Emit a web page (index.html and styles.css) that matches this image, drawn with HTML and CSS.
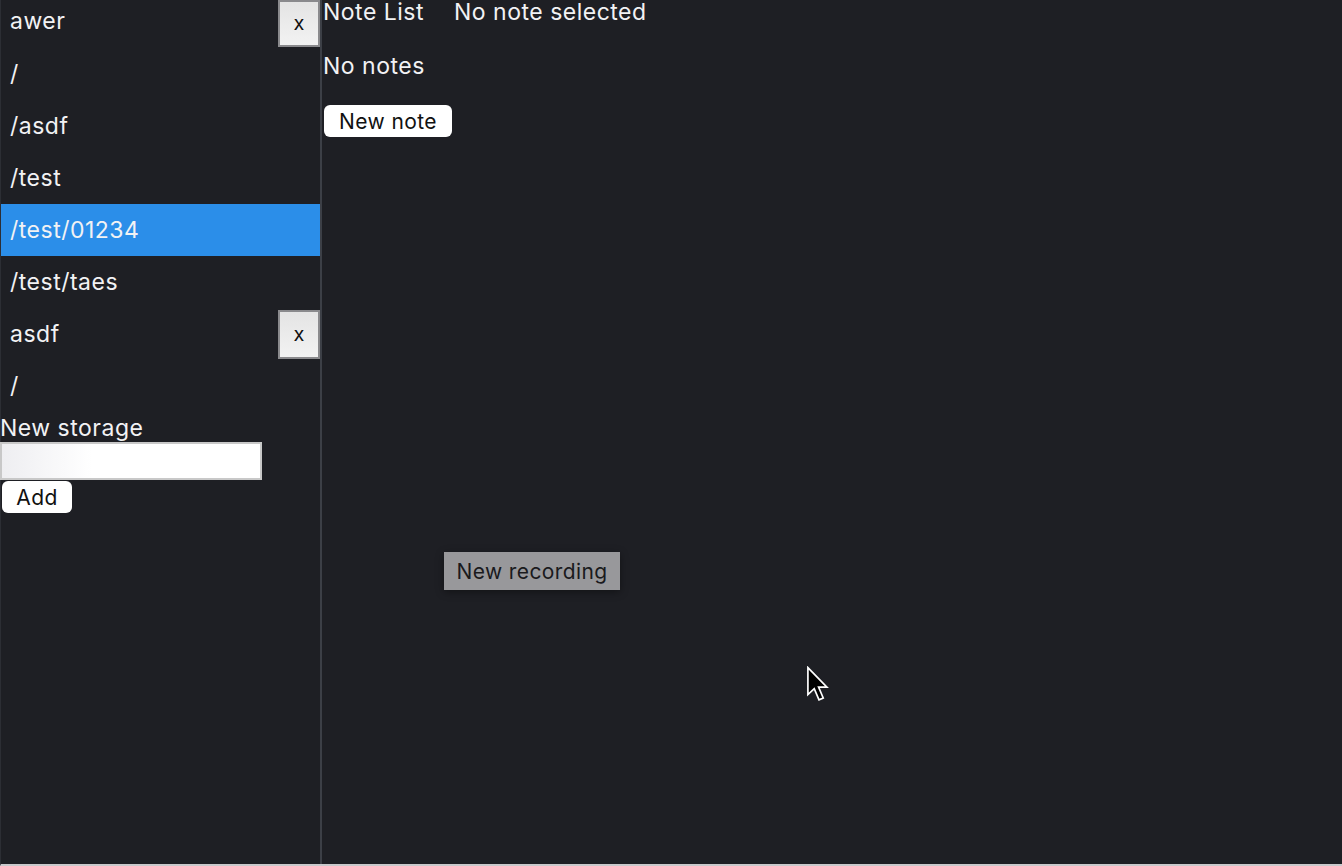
FILE: index.html
```html
<!DOCTYPE html>
<html>
  <head>
    <link rel="stylesheet" href="styles.css">
  </head>
  <body>
    <div class="app">
      <div class="sidebar">
        <div class="storage">
          <div class="storage-head">
            <span class="row-label">awer</span>
            <button class="remove-btn">x</button>
          </div>
          <div class="row">/</div>
          <div class="row">/asdf</div>
          <div class="row">/test</div>
          <div class="row active">/test/01234</div>
          <div class="row">/test/taes</div>
        </div>
        <div class="storage">
          <div class="storage-head">
            <span class="row-label">asdf</span>
            <button class="remove-btn">x</button>
          </div>
          <div class="row">/</div>
        </div>
        <div class="new-storage">
          <label class="new-storage-label">New storage</label>
          <input class="new-storage-input" type="text">
          <button class="white-btn add-btn">Add</button>
        </div>
      </div>

      <div class="main">
        <div class="note-list">
          <div class="heading">Note List</div>
          <div class="empty">No notes</div>
          <button class="white-btn new-note-btn">New note</button>
        </div>
        <div class="note-detail">
          <div class="heading">No note selected</div>
        </div>
        <button class="record-btn">New recording</button>
        <svg class="cursor" width="26" height="38" viewBox="0 0 24 36">
          <path d="M1.5 1.5 L1.5 27 L7.5 21.5 L12 32 L16 30.3 L11.6 20 L19.5 20 Z" fill="#000" stroke="#fff" stroke-width="1.6" stroke-linejoin="miter"/>
        </svg>
      </div>
    </div>
  </body>
</html>
```

FILE: styles.css
```css
html,
body {
  margin: 0;
  height: 100%;
}

body {
  font-family: Inter, "Noto Sans", sans-serif;
  background-color: #1e1f24;
  color: #f2f2f4;
  letter-spacing: 0.5px;
}

.app {
  display: flex;
  height: 864px;
  border-bottom: 2px solid #c9c9cc;
  border-left: 1px solid #2c2e34;
}

.sidebar {
  width: 319px;
  flex-shrink: 0;
  border-right: 2px solid #3c3f46;
}

.storage-head {
  display: flex;
  justify-content: space-between;
  align-items: center;
  height: 52px;
}

.storage:first-child .storage-head {
  height: 48px;
  align-items: flex-start;
}

.row-label {
  font-size: 23px;
  padding-left: 9px;
  line-height: 28px;
}

.storage:first-child .row-label {
  padding-top: 7px;
}

.row {
  height: 52px;
  line-height: 52px;
  padding-left: 9px;
  font-size: 23px;
}

.row.active {
  background-color: #2b8ee9;
}

.remove-btn {
  width: 42px;
  height: 49px;
  margin: 0;
  border: 2px solid #8a8a8d;
  background: linear-gradient(#e4e4e4, #f2f2f2);
  font-family: Inter, sans-serif;
  font-size: 20px;
  color: #111;
  padding: 0 0 2px;
  align-self: flex-start;
}

.storage + .storage .remove-btn {
  margin-top: 2px;
}

.storage:first-child .remove-btn {
  height: 47px;
}

.new-storage {
  display: flex;
  flex-direction: column;
  align-items: flex-start;
  margin-top: 2px;
}

.new-storage-label {
  font-size: 23px;
  line-height: 28px;
  margin-left: -1px;
}

.new-storage-input {
  width: 262px;
  height: 38px;
  box-sizing: border-box;
  margin: 0 0 0 -1px;
  border: 2px solid #c8c8c8;
  background: linear-gradient(to right, #eeeef1, #ffffff 90px);
}

.white-btn {
  background-color: #fff;
  border: none;
  border-radius: 6px;
  color: #111;
  font-family: Inter, sans-serif;
  font-size: 21px;
  letter-spacing: 0.4px;
  padding: 0;
  height: 32px;
}

.add-btn {
  width: 70px;
  margin: 1px 0 0 1px;
}

.main {
  flex: 1;
  display: flex;
  position: relative;
}

.heading {
  font-size: 23px;
  line-height: 24px;
}

.note-list {
  padding-left: 1px;
  width: 131px;
}

.empty {
  font-size: 23px;
  line-height: 24px;
  margin-top: 30px;
}

.new-note-btn {
  width: 128px;
  margin: 27px 0 0 1px;
}

.record-btn {
  position: absolute;
  left: 122px;
  top: 552px;
  width: 176px;
  height: 38px;
  background-color: #98989b;
  color: #1a1a1d;
  border: none;
  font-family: Inter, sans-serif;
  font-size: 21px;
  letter-spacing: 0.4px;
  box-shadow: 0 2px 8px rgba(0, 0, 0, 0.4);
}

.cursor {
  position: absolute;
  left: 484px;
  top: 666px;
}
```
